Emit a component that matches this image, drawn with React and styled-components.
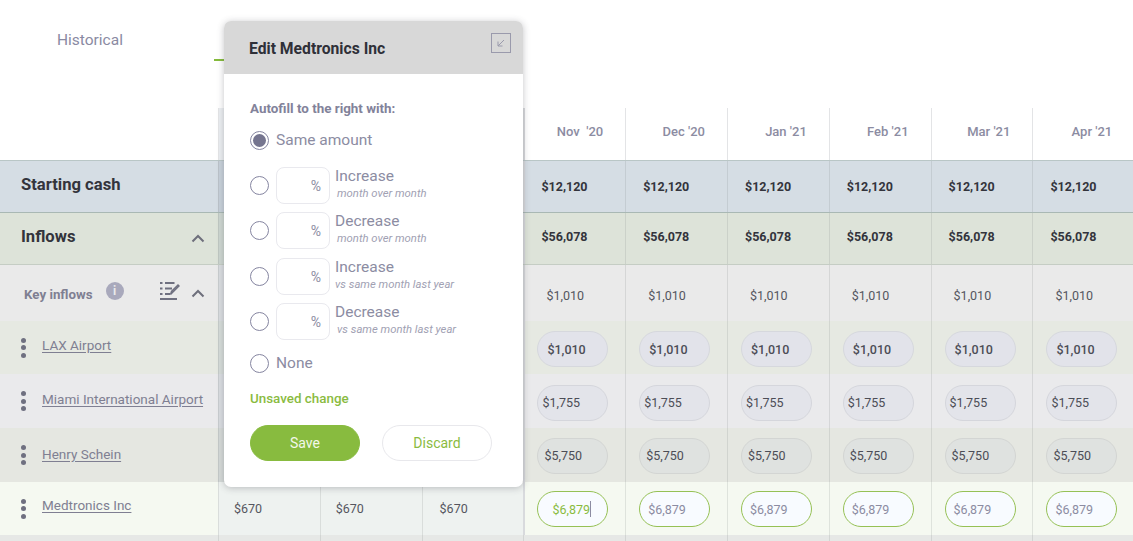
import React from 'react';
import styled, { createGlobalStyle } from 'styled-components';

const GlobalStyle = createGlobalStyle`
  html, body { margin: 0; padding: 0; background: #fff; overflow: hidden; }
  body { font-family: Roboto, "Liberation Sans", sans-serif; color: #2f3038; }
`;

const MONTHS = ["Aug '20", "Sep '20", "Oct '20", "Nov  '20", "Dec '20", "Jan '21", "Feb '21", "Mar '21", "Apr '21"];
// the first three months sit under the dialog, only the last row shows through
const HIDDEN = 3;

const Page = styled.div`
  position: relative;
  width: 1133px;
  height: 541px;
  overflow: hidden;
`;

const Tabs = styled.div`
  display: flex;
  height: 108px;
  box-sizing: border-box;
`;

const Tab = styled.div`
  width: 214px;
  padding: 31px 0 0 57px;
  box-sizing: border-box;
  font-size: 15.500px;
  line-height: 18px;
  color: #8a8aa2;
`;

const ActiveTab = styled.div`
  width: 120px;
  height: 61px;
  border-bottom: 2px solid #85bb3c;
  box-sizing: border-box;
`;

const Row = styled.div`
  display: grid;
  grid-template-columns: 218px repeat(9, 101.800px);
  height: ${(p) => p.$height}px;
  box-sizing: border-box;
  background: ${(p) => p.$bg};
  border-bottom: ${(p) => (p.$line ? `1px solid ${p.$line}` : 'none')};
  border-top: ${(p) => (p.$top ? `1px solid ${p.$top}` : 'none')};
`;

const Label = styled.div`
  display: flex;
  align-items: center;
  box-sizing: border-box;
  padding-left: ${(p) => p.$pad || 21}px;
  min-width: 0;
`;

const Title = styled.span`
  font-size: 16.600px;
  font-weight: 700;
  color: #33343c;
  margin-top: -4px;
`;

const SubTitle = styled.span`
  font-size: 13.300px;
  font-weight: 700;
  color: #7f7f92;
  margin-top: 2px;
`;

const Chevron = styled.svg`
  width: 14px;
  height: 9px;
  fill: none;
  stroke: #6e6f7c;
  stroke-width: 2;
  margin-left: ${(p) => p.$gap}px;
  margin-top: ${(p) => p.$mt || 0}px;
`;

const Cell = styled.div`
  display: flex;
  align-items: center;
  box-sizing: border-box;
  border-left: ${(p) => (p.$seam ? '2px solid #d8dadd' : `1px solid ${p.$line || 'rgba(120, 130, 130, 0.18)'}`)};
  padding-left: ${(p) => (p.$seam ? (p.$pad ?? 17) - 1 : p.$pad ?? 17)}px;
  padding-top: ${(p) => p.$top || 0}px;
  padding-bottom: ${(p) => p.$bottom || 0}px;
  font-size: 12.500px;
  font-weight: ${(p) => (p.$bold ? 700 : 400)};
  color: ${(p) => (p.$bold ? '#33343c' : '#55565f')};
  background: ${(p) => (p.$frozen ? 'rgba(120, 140, 165, 0.14)' : p.$bg || 'transparent')};
`;

const HeadCell = styled(Cell)`
  justify-content: flex-end;
  padding: 0 22px 6px 0;
  font-size: 13px;
  font-weight: 500;
  color: #8c8ca2;
  white-space: pre;
`;

const Pill = styled.div`
  display: flex;
  align-items: center;
  width: 71px;
  height: 36px;
  margin-top: ${(p) => p.$shift}px;
  box-sizing: border-box;
  border-radius: 18px;
  border: 1px solid ${(p) => p.$border};
  background: ${(p) => p.$bg};
  padding-left: ${(p) => p.$pad}px;
  font-size: 12.500px;
  font-weight: ${(p) => p.$weight || 400};
  color: ${(p) => p.$color || '#4c4d56'};
`;

const Caret = styled.i`
  width: 1px;
  height: 16px;
  background: #8c8ca2;
`;

const Dots = styled.span`
  display: flex;
  flex-direction: column;
  gap: 2.500px;
  margin-right: 16px;
  & > i {
    width: 5px;
    height: 5px;
    border-radius: 50%;
    background: #6f7080;
  }
`;

const Vendor = styled.a`
  font-size: 13.500px;
  color: #7f7f92;
  text-decoration: underline;
  text-underline-offset: 2px;
  margin-top: ${(p) => p.$shift}px;
  white-space: nowrap;
`;

const Info = styled.span`
  display: inline-flex;
  align-items: center;
  justify-content: center;
  width: 18px;
  height: 18px;
  margin: -5px 0 0 13px;
  border-radius: 50%;
  background: #a9a9bc;
  color: #eaeaea;
  font-size: 12px;
  font-weight: 700;
`;

const ListEdit = styled.svg`
  width: 21px;
  height: 19px;
  margin: -5px 0 0 35px;
  fill: none;
  stroke: #6f7080;
  stroke-width: 2;
`;

const Modal = styled.div`
  position: absolute;
  left: 224px;
  top: 21px;
  width: 299px;
  height: 466px;
  border-radius: 7px;
  background: #fff;
  box-shadow: 0 1px 7px rgba(60, 60, 70, 0.3);
  overflow: hidden;
`;

const ModalHead = styled.div`
  display: flex;
  align-items: flex-start;
  justify-content: space-between;
  height: 53px;
  box-sizing: border-box;
  padding: 12px 12px 0 25px;
  background: #d8d8d8;
`;

const ModalTitle = styled.h2`
  margin: 5.500px 0 0;
  font-size: 15.700px;
  line-height: 20px;
  font-weight: 700;
  color: #2f3038;
`;

const Collapse = styled.svg`
  width: 20px;
  height: 20px;
  fill: none;
  stroke: #9a9aac;
`;

const ModalBody = styled.div`
  display: flex;
  flex-direction: column;
  padding: 27px 25px 0 26px;
`;

const Heading = styled.div`
  font-size: 13.400px;
  line-height: 16px;
  font-weight: 700;
  color: #82829a;
`;

const Option = styled.div`
  display: flex;
  align-items: center;
  height: 36px;
  margin-top: ${(p) => p.$mt}px;
`;

const Radio = styled.span`
  position: relative;
  flex: none;
  width: 19px;
  height: 19px;
  margin-right: 7px;
  box-sizing: border-box;
  border-radius: 50%;
  border: 1.500px solid #8585a0;
  background: #fff;
  &::after {
    content: '';
    display: ${(p) => (p.$checked ? 'block' : 'none')};
    position: absolute;
    inset: 2px;
    border-radius: 50%;
    background: #75758f;
  }
`;

const OptionText = styled.span`
  font-size: 15.500px;
  color: #8c8ca2;
`;

const Percent = styled.div`
  display: flex;
  align-items: center;
  justify-content: flex-end;
  flex: none;
  width: 54px;
  height: 37px;
  box-sizing: border-box;
  padding: 2px 8px 0 0;
  border: 1px solid #e9e9ee;
  border-radius: 8px;
  font-size: 14px;
  color: #8c8ca2;
  margin-right: 5px;
`;

const Stack = styled.div`
  display: flex;
  flex-direction: column;
  margin-top: -3px;
`;

const Hint = styled.em`
  font-size: 11.300px;
  line-height: 13px;
  margin: 2px 0 0 ${(p) => p.$offset}px;
  color: #a1a1b3;
`;

const Unsaved = styled.div`
  margin-top: 10px;
  font-size: 13.400px;
  line-height: 16px;
  font-weight: 500;
  color: #8abb3f;
`;

const Actions = styled.div`
  display: flex;
  gap: 22px;
  margin-top: 18px;
`;

const Button = styled.button`
  width: 110px;
  height: 36px;
  padding: 0;
  border-radius: 18px;
  font: 400 14px Roboto, sans-serif;
  border: 1px solid ${(p) => (p.$primary ? '#88bb3f' : '#e8e8ec')};
  background: ${(p) => (p.$primary ? '#88bb3f' : '#fff')};
  color: ${(p) => (p.$primary ? '#f3f8ea' : '#8abb3f')};
`;

const ChevronUp = ({ gap, mt }) => (
  <Chevron $gap={gap} $mt={mt} viewBox="0 0 14 9">
    <path d="M1.500 7.500 7 2l5.500 5.500" />
  </Chevron>
);

const Grip = () => (
  <Dots><i /><i /><i /></Dots>
);

const PILL_ROWS = [
  { name: 'LAX Airport', value: '$1,010', bg: '#e6e9e2', pill: '#e2e3ea', border: '#d6d8dd', pad: 9, weight: 500, height: 53, shift: 3, nameShift: -6 },
  { name: 'Miami International Airport', value: '$1,755', bg: '#eaeaec', pill: '#e3e4ea', border: '#d5d6dc', pad: 4, height: 54, shift: 3, nameShift: -5 },
  { name: 'Henry Schein', value: '$5,750', bg: '#e5e7e1', pill: '#dfe2e0', border: '#d3d5d3', pad: 6, height: 54, shift: 1, nameShift: -3 },
];

const OPTIONS = [
  { text: 'Increase', hint: 'month over month', hintOffset: 2, mt: 9 },
  { text: 'Decrease', hint: 'month over month', hintOffset: 2, mt: 9 },
  { text: 'Increase', hint: 'vs same month last year', hintOffset: 0, mt: 10 },
  { text: 'Decrease', hint: 'vs same month last year', hintOffset: 2, mt: 9 },
];

const AMOUNT_PADS = [15, 15, 17];

const monthCells = (render) =>
  MONTHS.map((m, i) => render(m, i, { $frozen: i === 0, $seam: i === HIDDEN }));

export default function App() {
  return (
    <Page>
      <GlobalStyle />
      <Tabs>
        <Tab>Historical</Tab>
        <ActiveTab />
      </Tabs>

      <Row $height={52}>
        <Label />
        {monthCells((m, i, flags) => (
          <HeadCell key={m} $line="#e3e4e6" {...flags}>{i < HIDDEN ? '' : m}</HeadCell>
        ))}
      </Row>

      <Row $height={53} $bg="#d5dde4" $top="#b9c6c6" $line="#a9b8b4">
        <Label><Title>Starting cash</Title></Label>
        {monthCells((m, i, flags) => (
          <Cell key={m} $bold {...flags}>{i < HIDDEN ? '' : '$12,120'}</Cell>
        ))}
      </Row>

      <Row $height={52} $bg="#dde3d9" $line="#c5cdc4">
        <Label>
          <Title>Inflows</Title>
          <ChevronUp gap={116} />
        </Label>
        {monthCells((m, i, flags) => (
          <Cell key={m} $bold $bottom={4} {...flags}>{i < HIDDEN ? '' : '$56,078'}</Cell>
        ))}
      </Row>

      <Row $height={56} $bg="#eaeaea">
        <Label $pad={24}>
          <SubTitle>Key inflows</SubTitle>
          <Info>i</Info>
          <ListEdit viewBox="0 0 21 19">
            <path d="M1 2h2.500M6 2h9.500M1 7.500h2.500M6 7.500h7M1 13h2.500M6 13h5M1 18h17" />
            <path d="M11.500 13.500l1-3L19 4l1 1-6.500 6.500z" strokeWidth="1.400" />
          </ListEdit>
          <ChevronUp gap={11} mt={1} />
        </Label>
        {monthCells((m, i, flags) => (
          <Cell key={m} $pad={22} $top={4} {...flags}>{i < HIDDEN ? '' : '$1,010'}</Cell>
        ))}
      </Row>

      {PILL_ROWS.map((r) => (
        <Row key={r.name} $height={r.height} $bg={r.bg}>
          <Label>
            <Grip />
            <Vendor $shift={r.nameShift}>{r.name}</Vendor>
          </Label>
          {monthCells((m, i, flags) => (
            <Cell key={m} $pad={13} {...flags}>
              {i >= HIDDEN && (
                <Pill $bg={r.pill} $border={r.border} $pad={r.pad} $weight={r.weight} $shift={r.shift}>
                  {r.value}
                </Pill>
              )}
            </Cell>
          ))}
        </Row>
      ))}

      <Row $height={53} $bg="#f5f9f1">
        <Label>
          <Grip />
          <Vendor $shift={-7}>Medtronics Inc</Vendor>
        </Label>
        {monthCells((m, i, flags) =>
          i < HIDDEN ? (
            <Cell key={m} $pad={AMOUNT_PADS[i]} $bg="#eef2f0">$670</Cell>
          ) : (
            <Cell key={m} $pad={13} {...flags}>
              <Pill
                $bg="#f8fbff"
                $border="#96c155"
                $pad={i === HIDDEN ? 14 : 8}
                $color={i === HIDDEN ? '#8abb3f' : '#8c8ca2'}
                $shift={1}
              >
                $6,879
                {i === HIDDEN && <Caret />}
              </Pill>
            </Cell>
          )
        )}
      </Row>

      <Row $height={6} $bg="#e6e8e6">
        <Label />
        {MONTHS.map((m) => <Cell key={m} />)}
      </Row>

      <Modal>
        <ModalHead>
          <ModalTitle>Edit Medtronics Inc</ModalTitle>
          <Collapse viewBox="0 0 20 20">
            <rect x="0.500" y="0.500" width="19" height="19" />
            <path d="M13 7l-6 6M7 8.500V13h4.500" />
          </Collapse>
        </ModalHead>
        <ModalBody>
          <Heading>Autofill to the right with:</Heading>
          <Option $mt={5}>
            <Radio $checked />
            <OptionText>Same amount</OptionText>
          </Option>
          {OPTIONS.map((o, i) => (
            <Option key={i} $mt={o.mt}>
              <Radio />
              <Percent>%</Percent>
              <Stack>
                <OptionText>{o.text}</OptionText>
                <Hint $offset={o.hintOffset}>{o.hint}</Hint>
              </Stack>
            </Option>
          ))}
          <Option $mt={6}>
            <Radio />
            <OptionText>None</OptionText>
          </Option>
          <Unsaved>Unsaved change</Unsaved>
          <Actions>
            <Button $primary>Save</Button>
            <Button>Discard</Button>
          </Actions>
        </ModalBody>
      </Modal>
    </Page>
  );
}
